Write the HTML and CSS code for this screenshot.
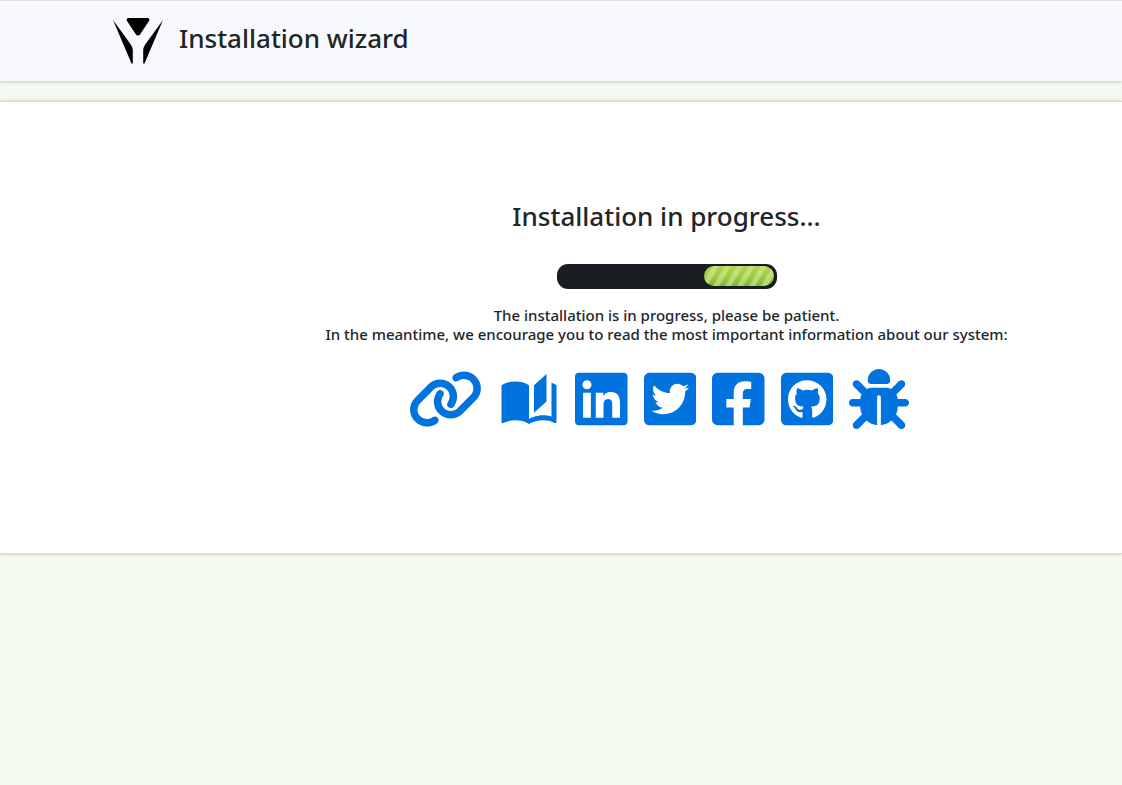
FILE: index.html
```
<!DOCTYPE html>
<html lang="en">
<head>
<meta charset="utf-8">
<title>Installation wizard</title>
<link rel="stylesheet" href="styles.css">
</head>
<body>
<header class="topbar">
  <svg class="logo" viewBox="0 0 52 48" aria-hidden="true">
    <path d="M16.500 2h19c1.800 0 2.400 1.500 1.500 2.900L28.200 18.200c-1.200 1.800-3.200 1.800-4.400 0L15 4.900C14.100 3.500 14.700 2 16.500 2z"/>
    <path d="M1 4l16 22c2.300 3.200 3.800 5.500 3.800 8.500V47.500h-1.300L12.500 31z"/>
    <path d="M51 4L35 26c-2.300 3.200-3.800 5.500-3.800 8.500V47.500h1.300L39.500 31z"/>
  </svg>
  <h1 class="heading">Installation wizard</h1>
</header>
<main class="panel">
  <h2 class="heading">Installation in progress...</h2>
  <svg class="loader" viewBox="0 0 220 25" role="img" aria-label="Loading">
    <defs>
      <linearGradient id="green" x1="0" y1="0" x2="0" y2="1">
        <stop offset="0" stop-color="#b0d650"/>
        <stop offset="0.5" stop-color="#9fce45"/>
        <stop offset="1" stop-color="#80b738"/>
      </linearGradient>
      <clipPath id="pill"><rect x="147" y="2" width="70" height="20" rx="10"/></clipPath>
    </defs>
    <rect width="220" height="25" rx="11" fill="#191d21"/>
    <g clip-path="url(#pill)">
      <rect x="147" y="2" width="70" height="20" fill="url(#green)"/>
      <path d="M144 22l12-20h6l-12 20zM156 22l12-20h6l-12 20zM168 22l12-20h6l-12 20zM180 22l12-20h6l-12 20zM192 22l12-20h6l-12 20zM204 22l12-20h6l-12 20z" fill="#d5e79c" opacity=".6"/>
    </g>
  </svg>
  <p class="message">The installation is in progress, please be patient.<br>In the meantime, we encourage you to read the most important information about our system:</p>
  <nav class="links" aria-label="Resources">
    <a href="#website" aria-label="Website"><svg viewBox="0 0 640 512"><path d="M579.8 267.7c56.5-56.5 56.5-148 0-204.5c-50-50-128.8-56.5-186.3-15.4l-1.6 1.1c-14.4 10.3-17.7 30.3-7.4 44.6s30.3 17.7 44.6 7.4l1.6-1.1c32.1-22.9 76-19.3 103.8 8.6c31.500 31.500 31.500 82.500 0 114L422.300 334.800c-31.500 31.500-82.500 31.500-114 0c-27.900-27.900-31.500-71.800-8.600-103.800l1.100-1.600c10.300-14.400 6.900-34.400-7.400-44.600s-34.400-6.900-44.600 7.400l-1.100 1.600C206.500 251.200 213 330 263 380c56.500 56.500 148 56.500 204.500 0L579.800 267.700zM60.200 244.300c-56.500 56.500-56.500 148 0 204.500c50 50 128.800 56.500 186.300 15.400l1.600-1.100c14.400-10.300 17.700-30.300 7.400-44.600s-30.300-17.700-44.600-7.400l-1.600 1.100c-32.100 22.900-76 19.300-103.800-8.600C74 372 74 321 105.500 289.500L217.700 177.200c31.500-31.500 82.500-31.500 114 0c27.900 27.900 31.500 71.800 8.600 103.900l-1.100 1.600c-10.300 14.400-6.900 34.400 7.400 44.600s34.400 6.900 44.600-7.400l1.100-1.600C433.500 260.800 427 182 377 132c-56.500-56.500-148-56.500-204.500 0L60.200 244.300z"/></svg></a>
    <a href="#docs" aria-label="Documentation"><svg viewBox="0 0 24 24"><path d="M19 2L14 6.500V17.500L19 13V2M6.500 5C4.550 5 2.450 5.400 1 6.500V21.160C1 21.410 1.250 21.660 1.500 21.660C1.600 21.660 1.650 21.590 1.750 21.590C3.100 20.940 5.050 20.500 6.500 20.500C8.450 20.500 10.550 20.900 12 22C13.350 21.150 15.800 20.500 17.500 20.500C19.150 20.500 20.850 20.810 22.250 21.560C22.350 21.610 22.400 21.590 22.500 21.590C22.750 21.590 23 21.340 23 21.090V6.500C22.400 6.050 21.750 5.750 21 5.500V19C19.900 18.650 18.700 18.500 17.500 18.500C15.800 18.500 13.350 19.150 12 20V6.500C10.550 5.400 8.450 5 6.500 5Z"/></svg></a>
    <a href="#linkedin" aria-label="LinkedIn"><svg viewBox="0 0 448 512"><path d="M416 32H31.900C14.300 32 0 46.500 0 64.300v383.400C0 465.500 14.300 480 31.900 480H416c17.600 0 32-14.500 32-32.300V64.300c0-17.800-14.400-32.300-32-32.300zM135.400 416H69V202.200h66.500V416zm-33.200-243c-21.300 0-38.500-17.300-38.500-38.500S80.900 96 102.200 96c21.200 0 38.500 17.300 38.500 38.500 0 21.300-17.200 38.500-38.500 38.500zm282.100 243h-66.400V312c0-24.800-.5-56.700-34.500-56.700-34.600 0-39.900 27-39.900 54.900V416h-66.400V202.200h63.700v29.200h.9c8.900-16.800 30.600-34.500 62.900-34.500 67.200 0 79.700 44.300 79.700 101.900V416z"/></svg></a>
    <a href="#twitter" aria-label="Twitter"><svg viewBox="0 0 448 512"><path d="M400 32H48C21.500 32 0 53.500 0 80v352c0 26.500 21.500 48 48 48h352c26.500 0 48-21.500 48-48V80c0-26.500-21.500-48-48-48zm-48.900 158.800c.2 2.800.2 5.700.2 8.500 0 86.700-66 186.600-186.600 186.600-37.200 0-71.700-10.800-100.700-29.400 5.300.6 10.400.8 15.800.8 30.700 0 58.900-10.400 81.400-28-28.800-.6-53-19.500-61.300-45.500 10.100 1.500 19.200 1.500 29.600-1.200-30-6.100-52.500-32.500-52.500-64.400v-.8c8.700 4.900 18.900 7.900 29.600 8.300a65.447 65.447 0 0 1-29.200-54.600c0-12.200 3.200-23.400 8.900-33.100 32.300 39.800 80.800 65.800 135.200 68.600-9.300-44.500 24-80.600 64-80.600 18.900 0 35.900 7.900 47.900 20.700 14.800-2.800 29-8.300 41.600-15.800-4.900 15.200-15.200 28-28.800 36.100 13.200-1.400 26-5.100 37.800-10.200-8.900 13.100-20.100 24.700-32.900 34z"/></svg></a>
    <a href="#facebook" aria-label="Facebook"><svg viewBox="0 0 448 512"><path d="M400 32H48A48 48 0 0 0 0 80v352a48 48 0 0 0 48 48h137.250V327.690h-63V256h63v-54.640c0-62.150 37-96.480 93.670-96.480 27.140 0 55.520 4.840 55.520 4.840v61h-31.270c-30.810 0-40.420 19.120-40.420 38.730V256h68.780l-11 71.690h-57.780V480H400a48 48 0 0 0 48-48V80a48 48 0 0 0-48-48z"/></svg></a>
    <a href="#github" aria-label="GitHub"><svg viewBox="0 0 448 512"><path d="M400 32H48C21.500 32 0 53.500 0 80v352c0 26.500 21.500 48 48 48h352c26.500 0 48-21.500 48-48V80c0-26.500-21.500-48-48-48zM277.300 415.700c-8.400 1.500-11.500-3.700-11.500-8 0-5.400.2-33 .2-55.300 0-15.600-5.200-25.500-11.300-30.700 37-4.100 76-9.200 76-73.100 0-18.200-6.500-27.300-17.100-39 1.700-4.300 7.400-22-1.700-45-13.900-4.300-45.700 17.900-45.700 17.900-13.200-3.700-27.500-5.600-41.600-5.600-14.100 0-28.400 1.900-41.600 5.600 0 0-31.800-22.200-45.700-17.900-9.100 22.900-3.500 40.600-1.700 45-10.600 11.700-15.600 20.800-15.600 39 0 63.600 37.300 69 74.300 73.100-4.800 4.300-9.100 11.700-10.600 22.300-9.500 4.300-33.800 11.700-48.300-13.900-9.100-15.800-25.500-17.100-25.500-17.100-16.200-.2-1.100 10.200-1.100 10.200 10.800 5 18.400 24.200 18.400 24.200 9.700 29.700 56.100 19.700 56.100 19.700 0 13.900.2 36.500.2 40.600 0 4.300-3 9.500-11.500 8-66-22.100-112.200-84.900-112.200-158.300 0-91.800 70.200-161.500 162-161.500S388 165.600 388 257.400c.1 73.400-44.700 136.300-110.700 158.300z"/></svg></a>
    <a href="#issues" aria-label="Report a bug"><svg viewBox="0 0 512 512"><path d="M256 0c53 0 96 43 96 96v3.600c0 15.700-12.700 28.400-28.400 28.400H188.400c-15.700 0-28.400-12.700-28.400-28.400V96c0-53 43-96 96-96zM41.400 105.400c12.500-12.500 32.800-12.500 45.300 0l64 64c.7 .7 1.300 1.400 1.900 2.100c14.200-7.300 30.400-11.400 47.500-11.400H312c17.100 0 33.200 4.100 47.500 11.400c.6-.7 1.200-1.400 1.900-2.100l64-64c12.500-12.500 32.800-12.500 45.300 0s12.500 32.800 0 45.300l-64 64c-.7 .7-1.400 1.300-2.100 1.900c6.200 12 10.100 25.300 11.100 39.500H480c17.700 0 32 14.300 32 32s-14.300 32-32 32H416c0 24.600-5.500 47.800-15.400 68.600c2.200 1.300 4.200 2.900 6 4.800l64 64c12.500 12.500 12.500 32.800 0 45.300s-32.800 12.500-45.300 0l-63.100-63.100c-24.500 21.800-55.800 36.200-90.300 39.600V240c0-8.800-7.200-16-16-16s-16 7.200-16 16V479.200c-34.500-3.400-65.800-17.800-90.300-39.600L86.600 502.600c-12.500 12.500-32.800 12.500-45.300 0s-12.500-32.800 0-45.300l64-64c1.900-1.900 3.900-3.400 6-4.800C101.500 367.800 96 344.600 96 320H32c-17.700 0-32-14.300-32-32s14.300-32 32-32H96.300c1.100-14.100 5-27.500 11.100-39.500c-.7-.6-1.400-1.200-2.100-1.900l-64-64c-12.500-12.500-12.500-32.800 0-45.300z"/></svg></a>
  </nav>
</main>
</body>
</html>
```
FILE: styles.css
```
* { box-sizing: border-box; }
body {
  min-height: 100vh;
  margin: 0;
  background: #f4faef;
  color: #212529;
  font-family: "Noto Sans", "Open Sans", sans-serif;
  font-size: 15px;
  font-weight: 500;
  line-height: 19px;
}
.topbar {
  display: flex;
  align-items: flex-start;
  gap: 15px;
  padding: 15px 112px 17px;
  border-top: 1px solid #dfe2e6;
  background: #f8f9fc;
  box-shadow: 0 1px 3px rgba(0, 0, 0, .2);
}
.logo { width: 52px; height: 48px; }
.heading {
  margin: 0;
  font-size: 26px;
  font-weight: 500;
  line-height: 44px;
}
.panel {
  display: flex;
  flex-direction: column;
  align-items: center;
  margin-top: 20px;
  padding: 92px 0 124px 211px;
  border: solid #d6d9d3;
  border-width: 1px 0;
  background: #fff;
  box-shadow: 0 0 4px rgba(0, 0, 0, .2);
  text-align: center;
}
.loader { width: 220px; height: 25px; margin-top: 26px; }
.message { margin: 17px 0 25px; white-space: nowrap; }
.links { display: flex; gap: 16px; padding-right: 16px; }
.links a { display: block; color: #0073de; }
.links svg { display: block; height: 60px; fill: currentColor; }
```
